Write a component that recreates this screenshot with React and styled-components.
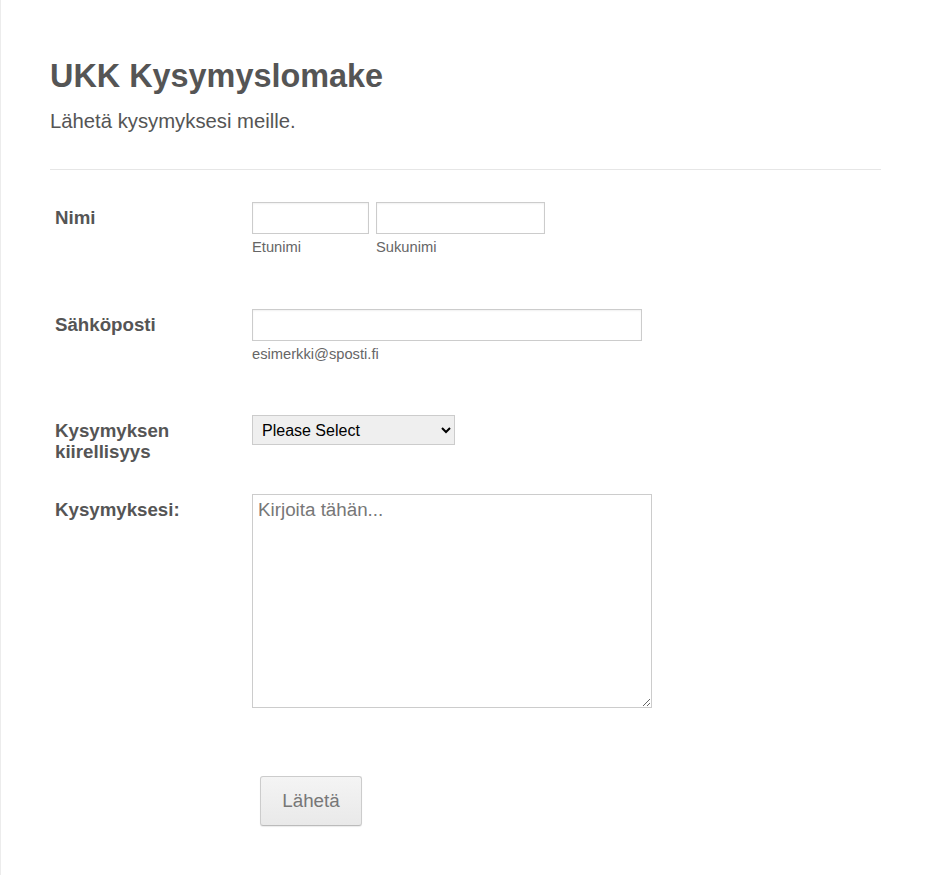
import React from 'react'
import styled, { createGlobalStyle } from 'styled-components'

const GlobalStyle = createGlobalStyle`
    html, body {
        margin: 0;
        padding: 0;
        background: #fff;
    }
    body {
        font-family: "Liberation Sans", Arial, sans-serif;
    }
`

const Page = styled.div`
    min-height: 875px;
    box-sizing: border-box;
    border-left: 1px solid #ececec;
    padding: 57px 49px 40px 49px;
    color: #555;
`

const Title = styled.h1`
    margin: 0;
    font-size: 32.4px;
    line-height: 38px;
    font-weight: 700;
    color: #555;
`

const Subtitle = styled.p`
    margin: 14px 0 0 0;
    font-size: 20.3px;
    line-height: 24px;
    color: #555;
`

const Divider = styled.hr`
    margin: 36px 0 0 0;
    border: 0;
    border-top: 1px solid #e6e6e6;
    height: 0;
`

const Row = styled.div`
    display: flex;
    align-items: flex-start;
    padding: ${p => p.top || 12}px 5px ${p => p.bottom || 12}px 5px;
`

const Label = styled.label`
    width: 197px;
    flex-shrink: 0;
    padding-top: 5px;
    font-size: 18.7px;
    line-height: 21px;
    font-weight: 700;
    color: #555;
`

const Field = styled.div`
    display: flex;
    gap: 7px;
`

const Column = styled.div`
    display: flex;
    flex-direction: column;
`

const TextInput = styled.input`
    box-sizing: border-box;
    width: ${p => p.w}px;
    height: 32px;
    margin: 0;
    border: 1px solid #ccc;
    box-shadow: inset 0 1px 2px rgba(0, 0, 0, 0.06);
    font: 16px "Liberation Sans", Arial, sans-serif;
    padding: 4px;
    outline: none;
`

const SubLabel = styled.span`
    margin-top: 5px;
    font-size: 14.7px;
    line-height: 17px;
    color: #666;
`

const Select = styled.select`
    box-sizing: border-box;
    width: 203px;
    height: 30px;
    margin: 0;
    border: 1px solid #ccc;
    background: #efefef;
    font: 16px "Liberation Sans", Arial, sans-serif;
    color: #000;
    padding: 0 5px;
`

const TextArea = styled.textarea`
    box-sizing: border-box;
    width: 400px;
    height: 214px;
    margin: 0;
    border: 1px solid #ccc;
    padding: 4px 5px;
    font: 18.8px/22px "Liberation Sans", Arial, sans-serif;
    color: #555;
    outline: none;

    &::placeholder {
        color: #777;
    }
`

const Button = styled.button`
    margin-left: 8px;
    width: 102px;
    height: 50px;
    border: 1px solid #ccc;
    border-bottom-color: #bbb;
    border-radius: 3px;
    background: linear-gradient(to bottom, #f4f4f4, #e9e9e9);
    box-shadow: 0 1px 1px rgba(0, 0, 0, 0.08);
    font: 18.8px "Liberation Sans", Arial, sans-serif;
    color: #777;
    cursor: pointer;
`

function App() {
    return (
        <Page>
            <GlobalStyle />
            <Title>UKK Kysymyslomake</Title>
            <Subtitle>Lähetä kysymyksesi meille.</Subtitle>
            <Divider />

            <Row top={32} bottom={41}>
                <Label>Nimi</Label>
                <Field>
                    <Column>
                        <TextInput w={117} />
                        <SubLabel>Etunimi</SubLabel>
                    </Column>
                    <Column>
                        <TextInput w={169} />
                        <SubLabel>Sukunimi</SubLabel>
                    </Column>
                </Field>
            </Row>

            <Row bottom={40}>
                <Label>Sähköposti</Label>
                <Column>
                    <TextInput w={390} />
                    <SubLabel>esimerkki@sposti.fi</SubLabel>
                </Column>
            </Row>

            <Row bottom={20}>
                <Label>Kysymyksen<br />kiirellisyys</Label>
                <Select defaultValue="">
                    <option value="">Please Select</option>
                    <option>Kiireellinen</option>
                    <option>Normaali</option>
                    <option>Ei kiireellinen</option>
                </Select>
            </Row>

            <Row>
                <Label>Kysymyksesi:</Label>
                <TextArea placeholder="Kirjoita tähän..." />
            </Row>

            <Row top={56}>
                <Label />
                <Button>Lähetä</Button>
            </Row>
        </Page>
    )
}

export default App
